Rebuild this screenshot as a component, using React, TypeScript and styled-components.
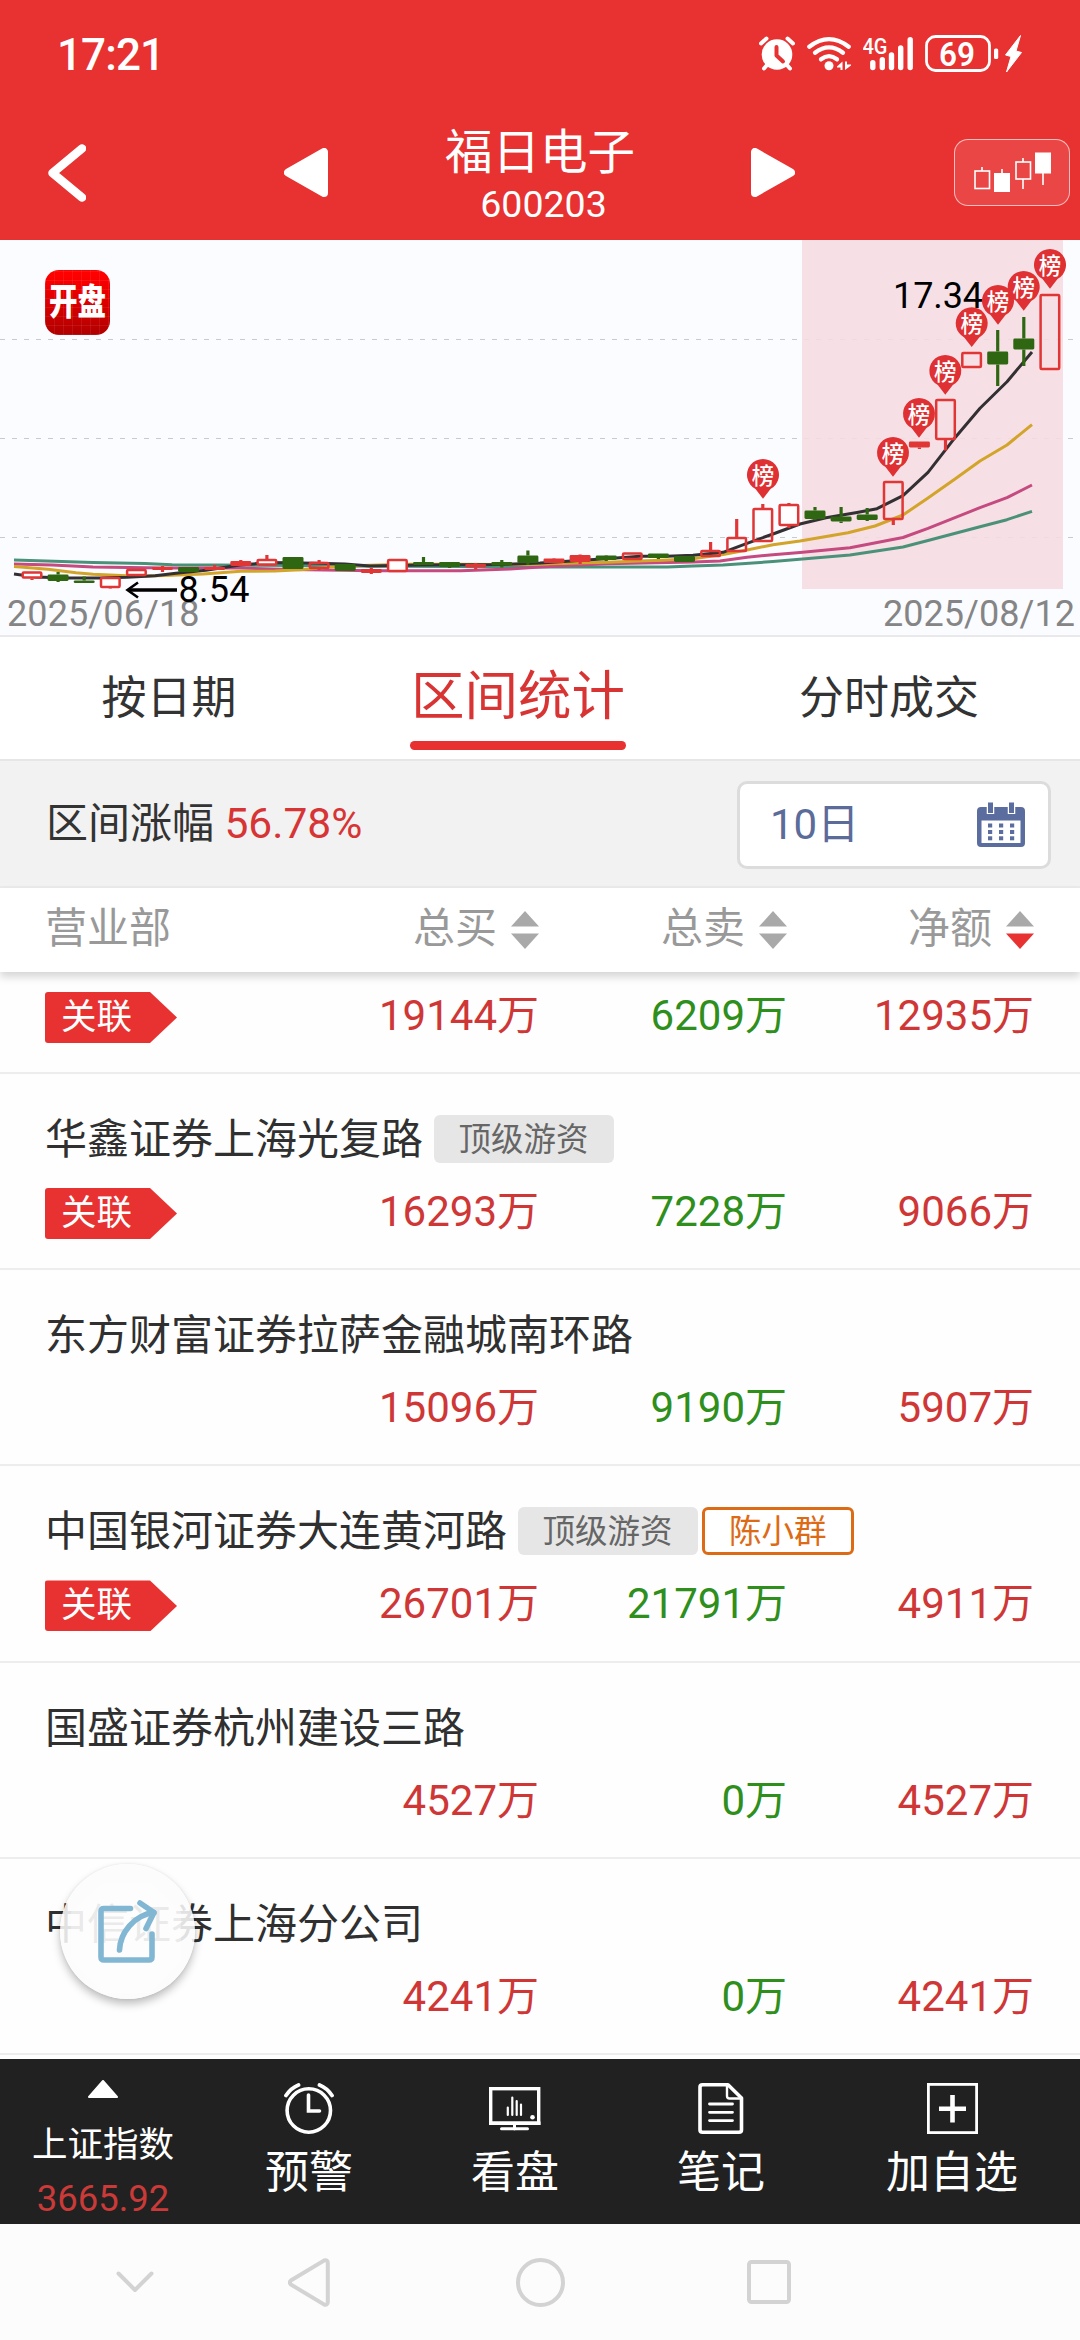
import React from "react";
import styled, { createGlobalStyle } from "styled-components";

const RED = "#e83131";
const UP = "#e03636";
const DOWN = "#2f6612";

const GlobalStyle = createGlobalStyle`
  *, *::before, *::after { box-sizing: border-box; }
  body {
    margin: 0;
    background: #fff;
    font-family: Roboto, "Noto Sans CJK SC", sans-serif;
    -webkit-font-smoothing: antialiased;
  }
  svg { display: block; }
`;

const Screen = styled.div`
  width: 1080px;
  height: 2340px;
  display: flex;
  flex-direction: column;
  overflow: hidden;
  background: #fff;
  color: #333;
`;

/* ---------- status bar ---------- */

const StatusBar = styled.div`
  height: 105px;
  flex: none;
  display: flex;
  justify-content: space-between;
  align-items: flex-start;
  padding: 30px 58px 0 57px;
  background: ${RED};
  color: #fff;
`;

const Clock = styled.div`
  font-size: 44px;
  line-height: 50px;
  font-weight: 500;
  letter-spacing: -0.9px;
`;

const StatusIcons = styled.div`
  display: flex;
  padding-top: 5px;
`;

const StatusSlot = styled.div<{ $gap: number }>`
  margin-left: ${(p) => p.$gap}px;
`;

/* ---------- header ---------- */

const Header = styled.header`
  height: 135px;
  flex: none;
  display: grid;
  grid-template-columns: 236px 156px 200px 155px 275px;
  align-items: center;
  padding: 0 10px 0 48px;
  background: ${RED};
  color: #fff;
`;

const TitleBlock = styled.div`
  padding-top: 10px;
  text-align: center;
`;

const StockName = styled.div`
  font-size: 47.5px;
  line-height: 50px;
  white-space: nowrap;
`;

const StockCode = styled.div`
  margin-top: 4px;
  padding: 0 0 1px 7px;
  font-size: 37.5px;
  line-height: 44px;
`;

const EndCell = styled.div`
  display: flex;
  justify-content: flex-end;
`;

const KLineButton = styled.div`
  width: 116px;
  height: 67px;
  display: flex;
  align-items: center;
  justify-content: center;
  border: 1.5px solid rgba(255, 255, 255, 0.65);
  border-radius: 14px;
  background: rgba(255, 255, 255, 0.1);
`;

/* ---------- chart ---------- */

const ChartPanel = styled.section`
  position: relative;
  height: 397px;
  flex: none;
  background: #fbfcff;
  border-bottom: 2px solid #e9e9eb;
`;

const Logo = styled.div`
  position: absolute;
  left: 45px;
  top: 30px;
  width: 65px;
  height: 65px;
  display: flex;
  align-items: center;
  justify-content: center;
  border-radius: 14px;
  background:
    repeating-linear-gradient(90deg, rgba(255, 255, 255, 0.07) 0 1px, transparent 1px 9px),
    repeating-linear-gradient(0deg, rgba(255, 255, 255, 0.07) 0 1px, transparent 1px 9px),
    linear-gradient(#ff0000 8%, #b00000);
`;

const LogoText = styled.span`
  font-size: 28.5px;
  line-height: 36px;
  font-weight: 900;
  color: #fff;
  transform: translateY(1px) scaleY(1.27);
`;

/* ---------- tabs ---------- */

const Tabs = styled.nav`
  height: 122px;
  flex: none;
  display: grid;
  grid-template-columns: 338px 360px 382px;
  justify-items: center;
`;

const Tab = styled.div<{ $active?: boolean }>`
  display: flex;
  flex-direction: column;
  align-items: center;
  width: ${(p) => (p.$active ? "216px" : "auto")};
  height: 113px;
  padding-top: ${(p) => (p.$active ? "30px" : "32px")};
  font-size: ${(p) => (p.$active ? "53.5px" : "45px")};
  line-height: 60px;
  color: ${(p) => (p.$active ? "#d93434" : "#333")};
  white-space: nowrap;
`;

const TabLine = styled.span`
  width: 216px;
  height: 9px;
  margin-top: 14px;
  flex: none;
  border-radius: 4.5px;
  background: ${RED};
`;

/* ---------- range bar ---------- */

const RangeBar = styled.div`
  height: 129px;
  flex: none;
  display: flex;
  align-items: center;
  justify-content: space-between;
  padding: 3px 29px 0 46px;
  border-top: 2px solid #e6e6e6;
  border-bottom: 2px solid #ebebeb;
  background: #f2f2f2;
`;

const RangeText = styled.div`
  padding-bottom: 2px;
  font-size: 42px;
  line-height: 50px;
  white-space: pre;
`;

const Percent = styled.span`
  font-size: 42.5px;
  color: #d73535;
`;

const DayPicker = styled.div`
  width: 314px;
  height: 88px;
  display: flex;
  align-items: center;
  justify-content: space-between;
  padding: 0 23px 0 30px;
  border: 3px solid #dcdcdc;
  border-radius: 10px;
  background: #fff;
  font-size: 42px;
  line-height: 50px;
  color: #5b6b9a;
`;

/* ---------- table ---------- */

const columns = "246px 248px 248px 247px";

const TableHead = styled.div`
  position: relative;
  z-index: 1;
  height: 84px;
  flex: none;
  display: grid;
  grid-template-columns: ${columns};
  padding: 16px 46px 0 45px;
  background: #fff;
  box-shadow: 0 5px 8px rgba(0, 0, 0, 0.16);
  font-size: 42px;
  line-height: 50px;
  color: #999;
`;

const HeadCell = styled.div<{ $first?: boolean }>`
  display: flex;
  justify-content: ${(p) => (p.$first ? "flex-start" : "flex-end")};
  gap: 14px;
`;

const SortIcon = styled.svg`
  width: 28px;
  height: 38px;
  margin-top: 7px;
`;

const List = styled.div`
  flex: 1;
  min-height: 0;
  overflow: hidden;
  background: #fefefe;
`;

const Row = styled.div<{ $cut?: boolean }>`
  height: ${(p) => (p.$cut ? "102px" : "196.2px")};
  padding: ${(p) => (p.$cut ? "20px" : "41px")} 46px 0 45px;
  border-bottom: 2px solid #ededed;
`;

const NameLine = styled.div`
  height: 48px;
  margin-bottom: 25px;
  display: flex;
  align-items: center;
  gap: 4px;
  white-space: nowrap;
`;

const BranchName = styled.span`
  margin-right: 6.5px;
  padding-top: 2px;
  font-size: 42px;
  line-height: 48px;
  color: #303030;
`;

const Chip = styled.span<{ $outlined?: boolean }>`
  height: 48px;
  padding: 0 ${(p) => (p.$outlined ? 24.5 : 25)}px;
  border: ${(p) => (p.$outlined ? "3px solid #dd6b16" : "0")};
  border-radius: 6px;
  background: ${(p) => (p.$outlined ? "#fff" : "#e6e6e6")};
  font-size: 32.5px;
  line-height: ${(p) => (p.$outlined ? 44 : 50)}px;
  color: ${(p) => (p.$outlined ? "#dd6b16" : "#666")};
`;

const ValueLine = styled.div`
  height: 51px;
  display: grid;
  grid-template-columns: ${columns};
`;

const LinkTag = styled.div`
  width: 132px;
  height: 51px;
  padding-left: 16px;
  border-radius: 3px;
  background: ${RED};
  clip-path: polygon(0 0, 105px 0, 132px 50%, 105px 100%, 0 100%);
  font-size: 35.5px;
  line-height: 51px;
  color: #fff;
`;

const Value = styled.div<{ $tone: "up" | "down" }>`
  font-size: 42px;
  line-height: 48px;
  text-align: right;
  color: ${(p) => (p.$tone === "up" ? "#cf3737" : "#2e8f1c")};
`;

/* ---------- floating share button ---------- */

const ShareButton = styled.div`
  position: absolute;
  left: 60px;
  top: 1864px;
  z-index: 2;
  width: 135px;
  height: 135px;
  border-radius: 50%;
  background: rgba(252, 252, 252, 0.87);
  box-shadow: 0 5px 9px rgba(0, 0, 0, 0.25), 0 0 3px rgba(0, 0, 0, 0.08);
`;

/* ---------- bottom bars ---------- */

const BottomBar = styled.footer`
  height: 165px;
  flex: none;
  display: grid;
  grid-template-columns: repeat(4, 206px) 256px;
  background: #212121;
  color: #fff;
`;

const IndexItem = styled.div`
  display: flex;
  flex-direction: column;
  align-items: center;
  padding-top: 21px;
  font-size: 35.5px;
  line-height: 44px;
`;

const IndexName = styled.span`
  margin-top: 25px;
`;

const IndexValue = styled.span`
  margin-top: 10px;
  font-size: 36.5px;
  color: #c93a38;
`;

const MenuItem = styled.div`
  display: flex;
  flex-direction: column;
  align-items: center;
  padding-top: 24px;
  font-size: 44px;
  line-height: 54px;
`;

const MenuLabel = styled.span`
  margin-top: 12px;
`;

const SystemNav = styled.div`
  height: 116px;
  flex: none;
  display: grid;
  grid-template-columns: 269px 79px 384px 74px;
  align-items: center;
  justify-items: center;
  background: #fcfcfc;
`;

/* ---------- chart data ---------- */

type Kind = "hollow" | "solid" | "down";
// kind, body top, body bottom, wick top, wick bottom
const candles: [Kind, number, number, number, number][] = [
  ["hollow", 571.5, 578.5, 571.5, 580],
  ["down", 574.5, 581, 572, 582],
  ["down", 580.5, 583, 576.5, 583],
  ["hollow", 577, 588, 577, 588.5],
  ["hollow", 569, 576, 569, 576],
  ["solid", 567, 570, 566, 572],
  ["down", 567, 572, 567, 572],
  ["solid", 567, 570, 565, 570],
  ["solid", 561, 566, 560, 566],
  ["hollow", 559, 565.5, 555, 566],
  ["down", 557, 569, 557, 569],
  ["hollow", 562, 569, 560, 570],
  ["down", 564, 571, 564, 571],
  ["solid", 569, 573, 568, 574],
  ["hollow", 559, 572, 559, 572],
  ["down", 562, 565, 557, 565],
  ["down", 562, 567, 562, 568],
  ["solid", 564, 567.5, 563, 569.5],
  ["down", 562, 565.5, 560, 567.5],
  ["down", 555.5, 563, 550.5, 565],
  ["solid", 558.5, 563, 558, 563],
  ["solid", 555, 562, 554.5, 564],
  ["down", 555.5, 560, 555, 561],
  ["hollow", 552.5, 560, 552.5, 560],
  ["down", 553.5, 558, 553.5, 559],
  ["down", 556, 562, 556, 562],
  ["hollow", 550, 557, 542, 557],
  ["hollow", 537, 552, 519, 552],
  ["hollow", 508, 542, 504, 542],
  ["hollow", 504, 526, 503, 528],
  ["down", 510.5, 519, 507, 520],
  ["down", 516.5, 521.5, 507, 523],
  ["down", 514.5, 520, 508, 521],
  ["hollow", 481, 520, 481, 525],
  ["solid", 441.5, 447.5, 441.5, 449],
  ["hollow", 399, 440, 399, 450.5],
  ["hollow", 352, 368, 352, 368],
  ["down", 351.5, 364.5, 330, 386],
  ["down", 338.5, 349.5, 317, 366],
  ["hollow", 294, 370, 294, 370],
];

// candles whose body lets the average lines show through
const seeThrough = new Set([11, 23, 26, 27, 28, 33, 34, 35, 36, 39]);

const averages = [
  {
    color: "#4b9179",
    points:
      "14,560 62,561.5 93,562.5 145,563.5 172,564.7 293,565.5 345,566 540,567 667,567 693,566 723,565 773,561.5 850,555 903,547 928,540.5 980,526.7 1007,519.7 1032,511.3",
  },
  {
    color: "#c44a80",
    points:
      "14,564 52,565 93,567 165,568 240,568 293,569.5 372,570.7 461,570.7 510,569 540,567 607,563.7 693,562 720,561 747,557.3 770,555 800,552.5 850,547.7 903,537.5 928,528.3 980,507.7 1007,497.7 1032,485",
  },
  {
    color: "#d2a42a",
    points:
      "14,566.5 48,569.3 76,572.7 93,574.3 138,576.3 165,575.5 203,574 241,571.3 275,571 300,569.7 344,566 406,564.3 448,564.3 500,564.5 540,564 607,562.3 667,560 693,558.7 723,554.5 747,550 773,544.7 800,541 848,532.7 875,526 903,515 928,498 955,479 980,461 1007,445 1032,424.6",
  },
  {
    color: "#333033",
    points:
      "14,574 36,577 66,578 100,578 127,577.3 155,575.7 176,573.3 206,570.3 240,565 270,562.5 317,563.3 345,564 370,566 420,565 500,564.5 540,563 560,561.7 613,558.3 640,556.3 667,556.3 693,555.3 723,552.3 747,543.3 773,534 800,524 826,517.7 857,512.5 877,508.7 903,495.7 928,472.3 955,437.7 980,408.3 1007,381.7 1032,352",
  },
];

const pins: [number, number][] = [
  [763, 475.7],
  [893, 453.7],
  [919, 414.7],
  [945.3, 371.7],
  [971.7, 324],
  [998, 301.7],
  [1023.7, 287.7],
  [1050, 265.7],
];

const StockChart = () => (
  <svg width="1080" height="395" viewBox="0 240 1080 395">
    {[339.5, 438.5, 537.5].map((y) => (
      <path key={y} d={`M0 ${y}H1080`} stroke="#c9cacf" strokeDasharray="5 7" />
    ))}
    <rect x="802" y="240" width="261" height="349" fill="#f6dce1" fillOpacity="0.88" />
    <text x="7" y="625.700" fontSize="36" fill="#858585" textLength="192.500">2025/06/18</text>
    <text x="883" y="625.700" fontSize="36" fill="#858585" textLength="192">2025/08/12</text>
    {averages.map((a) => (
      <polyline key={a.color} points={a.points} fill="none" stroke={a.color} strokeWidth="3" strokeLinejoin="round" />
    ))}
    {candles.map(([kind, top, bottom, high, low], i) => {
      const x = 32 + i * 26.1;
      const color = kind === "down" ? DOWN : UP;
      return (
        <g key={i} stroke={color}>
          {high < top && <path d={`M${x} ${high}V${top}`} strokeWidth="3.2" />}
          {low > bottom && <path d={`M${x} ${bottom}V${low}`} strokeWidth="3.2" />}
          {kind === "hollow" ? (
            <rect
              x={x - 9.3}
              y={top + 1}
              width="18.6"
              height={bottom - top - 2}
              rx="1"
              strokeWidth="2.5"
              fill={seeThrough.has(i) ? "none" : "#fff"}
            />
          ) : (
            <rect x={x - 10.5} y={top} width="21" height={bottom - top} rx="1.4" stroke="none" fill={color} />
          )}
        </g>
      );
    })}
    <text x="893" y="308.300" fontSize="36" fill="#000" textLength="90">17.34</text>
    <text x="178.500" y="601.700" fontSize="36" fill="#000" textLength="71">8.54</text>
    <path d="M128 590H177" stroke="#000" strokeWidth="3.600" />
    <path d="M138 582.500L127.500 590L138 597.500" fill="none" stroke="#000" strokeWidth="2.600" />
    {pins.map(([x, y]) => (
      <g key={x}>
        <path
          d={`M${x} ${y + 23}L${x - 7.5} ${y + 13.4}A16 16 0 1 1 ${x + 7.5} ${y + 13.4}Z`}
          fill="#df3133"
        />
        <text x={x} y={y + 8} fontSize="22.500" fontWeight="500" fill="#fff" textAnchor="middle">榜</text>
      </g>
    ))}
  </svg>
);

/* ---------- icons ---------- */

const AlarmStatusIcon = () => (
  <svg width="36" height="37" viewBox="758 35 36 37">
    <circle cx="776" cy="54.500" r="15.300" fill="#fff" />
    <path d="M760 43.500L765.500 38.500M792 43.500L786.500 38.500M766 65L763 68.500M786 65L789 68.500" stroke="#fff" strokeWidth="4" strokeLinecap="round" />
    <path d="M775.500 47V55.500L782 61.500" fill="none" stroke={RED} strokeWidth="4" strokeLinecap="round" strokeLinejoin="round" />
  </svg>
);

const WifiIcon = () => (
  <svg width="44" height="37" viewBox="806 35 44 37">
    <g fill="none" stroke="#fff" strokeWidth="4.300" strokeLinecap="round">
      <path d="M808.300 46.700Q828 31.500 847.700 46.700" />
      <path d="M814 52.800Q828 42 842 52.800" />
      <path d="M820 59.300Q828 53 836 59.300" />
    </g>
    <circle cx="828" cy="65.800" r="4.500" fill="#fff" />
    <path d="M836 66.500L841.500 61.500V70H839.500V67.500H836ZM850 65.500L844 70V61.500H846V64.500H850Z" fill="#fff" />
  </svg>
);

const SignalIcon = () => (
  <svg width="50" height="37" viewBox="862 35 50 37">
    <text x="861.500" y="53.700" fontSize="22" fontWeight="500" fill="#fff" textLength="25" lengthAdjust="spacingAndGlyphs">4G</text>
    <path d="M871.800 62.700V67.500M881.300 59.700V67.500M890.500 55V67.500M899.700 48V67.500M909.200 39.700V67.500" stroke="#fff" strokeWidth="5.400" strokeLinecap="round" />
  </svg>
);

const BatteryIcon = () => (
  <svg width="97" height="38" viewBox="924 35 97 38">
    <rect x="925.500" y="36.500" width="63" height="34" rx="9" fill="none" stroke="#fff" strokeWidth="2.800" />
    <rect x="993" y="48.500" width="4.200" height="10.500" rx="1.600" fill="#fff" />
    <text x="956" y="65.500" fontSize="33" fontWeight="600" fill="#fff" textAnchor="middle" textLength="36" lengthAdjust="spacingAndGlyphs">69</text>
    <path d="M1019.500 35.500L1004.500 55L1010 56.500L1005.500 72L1020.500 52.500L1015 51Z" fill="#fff" stroke="#fff" strokeWidth="1" strokeLinejoin="round" />
  </svg>
);

const BackIcon = () => (
  <svg width="38" height="58" viewBox="0 0 38 58">
    <path d="M34 4.500L4.500 29L34 53.500" fill="none" stroke="#fff" strokeWidth="8.500" strokeLinecap="round" strokeLinejoin="round" />
  </svg>
);

const Triangle = ({ flip }: { flip?: boolean }) => (
  <svg width="44" height="49" viewBox="0 0 44 49">
    <path
      d={flip ? "M4 4V45L40 24.500Z" : "M40 4V45L4 24.500Z"}
      fill="#fff"
      stroke="#fff"
      strokeWidth="8"
      strokeLinejoin="round"
    />
  </svg>
);

const KLineIcon = () => (
  <svg width="78" height="42" viewBox="973 152 78 42">
    <g fill="none" stroke="#fff" strokeWidth="1.600">
      <path d="M982 167V171M1002 169V173M1023 158V162M1023 179V189M1043 173V185" />
      <rect x="975" y="171" width="14.500" height="17.500" />
      <rect x="1016" y="162" width="14.500" height="17" />
    </g>
    <path d="M994 173H1010V192H994ZM1035 152.500H1051V173.500H1035Z" fill="#fff" />
  </svg>
);

const CalendarIcon = () => (
  <svg width="48" height="46" viewBox="0 0 48 46">
    <path fillRule="evenodd" d="M4 5H44Q48 5 48 9V41Q48 45 44 45H4Q0 45 0 41V9Q0 5 4 5ZM4.500 18.500V41H43.500V18.500Z" fill="#5b6d9f" />
    <path d="M13.500 0V12M34.500 0V12" stroke="#fff" strokeWidth="7.500" />
    <path d="M13.500 0.500V11M34.500 0.500V11" stroke="#5b6d9f" strokeWidth="5" />
    {[21.5, 28, 34.3].map((y) =>
      [11, 22, 33].map((x) => <rect key={`${x}-${y}`} x={x} y={y} width="4.200" height="4" fill="#5b6d9f" />)
    )}
  </svg>
);

const SortArrows = ({ active }: { active?: boolean }) => (
  <SortIcon viewBox="0 0 28 38">
    <path d="M14 0L28 15.500H0Z" fill="#a9a9a9" />
    <path d="M14 38L0 22.500H28Z" fill={active ? RED : "#a9a9a9"} />
  </SortIcon>
);

const ShareIcon = () => (
  <svg width="135" height="135" viewBox="60 1864 135 135">
    <path d="M103 1883H151L181 1912V1961L151 1993H103L71 1961V1912Z" fill="#fff" fillOpacity="0.300" />
    <g fill="none" stroke="#82b7d4" strokeWidth="5.600" strokeLinecap="round" strokeLinejoin="round">
      <path d="M130.500 1908.500H104Q101 1908.500 101 1911.500V1957Q101 1960 104 1960H149Q152 1960 152 1957V1934" />
      <path d="M119.500 1950C120 1933 134 1915 154 1912.500" />
      <path d="M140 1903L154 1912.500L146 1928.500" />
    </g>
  </svg>
);

const AlarmIcon = () => (
  <svg width="50" height="51" viewBox="284 2083 50 51">
    <g fill="none" stroke="#fff" strokeLinecap="round">
      <circle cx="308.800" cy="2110.500" r="21.700" strokeWidth="3.600" />
      <path d="M308.500 2095V2111H319.500" strokeWidth="3.600" />
      <path d="M286 2095.500Q291 2088 298.500 2085M332 2095.500Q327 2088 319.500 2085" strokeWidth="3.800" />
    </g>
  </svg>
);

const MonitorIcon = () => (
  <svg width="52" height="51" viewBox="489 2083 52 51">
    <rect x="490.700" y="2088.700" width="48" height="34.500" fill="none" stroke="#fff" strokeWidth="3.400" />
    <path d="M489 2121.500H540.500V2125H489Z" fill="#fff" />
    <path d="M514.500 2124V2129M501.500 2128.800H527.500" fill="none" stroke="#fff" strokeWidth="3" strokeLinecap="round" />
    <path d="M507.800 2107.500V2115M512.300 2097.500V2115M516.700 2101V2115M521 2104.500V2115" stroke="#fff" strokeWidth="2.200" strokeLinecap="round" />
    <circle cx="532.500" cy="2117.300" r="2.300" fill="#fff" />
  </svg>
);

const NoteIcon = () => (
  <svg width="46" height="51" viewBox="698 2083 46 51">
    <g fill="none" stroke="#fff" strokeLinejoin="round">
      <path d="M702.500 2084.800H728L741.500 2098V2130Q741.500 2132.200 739 2132.200H702.500Q700 2132.200 700 2130V2087Q700 2084.800 702.500 2084.800Z" strokeWidth="3.600" />
      <path d="M727 2085V2096Q727 2098.500 729.500 2098.500H741" strokeWidth="2.400" />
      <path d="M709.500 2104H732.500M709.500 2112.300H732.500M709.500 2120.600H732.500" strokeWidth="2.800" strokeLinecap="round" />
    </g>
  </svg>
);

const AddIcon = () => (
  <svg width="51" height="51" viewBox="0 0 51 51">
    <rect x="1.400" y="1.400" width="48.200" height="48.200" fill="none" stroke="#fff" strokeWidth="2.800" />
    <path d="M25.500 12V39.500M12 25.700H39" stroke="#fff" strokeWidth="4.600" />
  </svg>
);

/* ---------- table data ---------- */

type Branch = {
  name?: string;
  chip?: string;
  person?: string;
  linked?: boolean;
  buy: string;
  sell: string;
  net: string;
};

const branches: Branch[] = [
  { linked: true, buy: "19144万", sell: "6209万", net: "12935万" },
  { name: "华鑫证券上海光复路", chip: "顶级游资", linked: true, buy: "16293万", sell: "7228万", net: "9066万" },
  { name: "东方财富证券拉萨金融城南环路", buy: "15096万", sell: "9190万", net: "5907万" },
  { name: "中国银河证券大连黄河路", chip: "顶级游资", person: "陈小群", linked: true, buy: "26701万", sell: "21791万", net: "4911万" },
  { name: "国盛证券杭州建设三路", buy: "4527万", sell: "0万", net: "4527万" },
  { name: "中信证券上海分公司", buy: "4241万", sell: "0万", net: "4241万" },
];

const menu = [
  { label: "预警", icon: <AlarmIcon /> },
  { label: "看盘", icon: <MonitorIcon /> },
  { label: "笔记", icon: <NoteIcon /> },
  { label: "加自选", icon: <AddIcon /> },
];

export default function App() {
  return (
    <>
      <GlobalStyle />
      <Screen>
        <StatusBar>
          <Clock>17:21</Clock>
          <StatusIcons>
            <StatusSlot $gap={0}><AlarmStatusIcon /></StatusSlot>
            <StatusSlot $gap={12}><WifiIcon /></StatusSlot>
            <StatusSlot $gap={12}><SignalIcon /></StatusSlot>
            <StatusSlot $gap={12}><BatteryIcon /></StatusSlot>
          </StatusIcons>
        </StatusBar>

        <Header>
          <BackIcon />
          <Triangle />
          <TitleBlock>
            <StockName>福日电子</StockName>
            <StockCode>600203</StockCode>
          </TitleBlock>
          <EndCell><Triangle flip /></EndCell>
          <EndCell>
            <KLineButton><KLineIcon /></KLineButton>
          </EndCell>
        </Header>

        <ChartPanel>
          <StockChart />
          <Logo><LogoText>开盘</LogoText></Logo>
        </ChartPanel>

        <Tabs>
          <Tab>按日期</Tab>
          <Tab $active>区间统计<TabLine /></Tab>
          <Tab>分时成交</Tab>
        </Tabs>

        <RangeBar>
          <RangeText>区间涨幅 <Percent>56.78%</Percent></RangeText>
          <DayPicker>
            <span>10日</span>
            <CalendarIcon />
          </DayPicker>
        </RangeBar>

        <TableHead>
          <HeadCell $first>营业部</HeadCell>
          <HeadCell>总买<SortArrows /></HeadCell>
          <HeadCell>总卖<SortArrows /></HeadCell>
          <HeadCell>净额<SortArrows active /></HeadCell>
        </TableHead>

        <List>
          {branches.map((b, i) => (
            <Row key={i} $cut={!b.name}>
              {b.name && (
                <NameLine>
                  <BranchName>{b.name}</BranchName>
                  {b.chip && <Chip>{b.chip}</Chip>}
                  {b.person && <Chip $outlined>{b.person}</Chip>}
                </NameLine>
              )}
              <ValueLine>
                {b.linked ? <LinkTag>关联</LinkTag> : <span />}
                <Value $tone="up">{b.buy}</Value>
                <Value $tone="down">{b.sell}</Value>
                <Value $tone="up">{b.net}</Value>
              </ValueLine>
            </Row>
          ))}
        </List>

        <ShareButton><ShareIcon /></ShareButton>

        <BottomBar>
          <IndexItem>
            <svg width="30" height="18" viewBox="0 0 30 18">
              <path d="M15 1L29 17H1Z" fill="#fff" stroke="#fff" strokeWidth="2" strokeLinejoin="round" />
            </svg>
            <IndexName>上证指数</IndexName>
            <IndexValue>3665.92</IndexValue>
          </IndexItem>
          {menu.map((m) => (
            <MenuItem key={m.label}>
              {m.icon}
              <MenuLabel>{m.label}</MenuLabel>
            </MenuItem>
          ))}
        </BottomBar>

        <SystemNav>
          <svg width="38" height="22" viewBox="0 0 38 22">
            <path d="M2.500 2.500L19 19L35.500 2.500" fill="none" stroke="#d3d3d3" strokeWidth="4" strokeLinecap="round" strokeLinejoin="round" />
          </svg>
          <svg width="42" height="49" viewBox="0 0 42 49">
            <path d="M2.800 22.500L36 2.500Q39.800 1.500 39.800 5V44Q39.800 47.500 36 46.500L2.800 26.500Q1 24.500 2.800 22.500Z" fill="none" stroke="#d3d3d3" strokeWidth="4" />
          </svg>
          <svg width="49" height="49" viewBox="0 0 49 49">
            <circle cx="24.500" cy="24.500" r="22.500" fill="none" stroke="#d3d3d3" strokeWidth="4" />
          </svg>
          <svg width="44" height="44" viewBox="0 0 44 44">
            <rect x="2" y="2" width="40" height="40" rx="2.500" fill="none" stroke="#d3d3d3" strokeWidth="4" />
          </svg>
        </SystemNav>
      </Screen>
    </>
  );
}
